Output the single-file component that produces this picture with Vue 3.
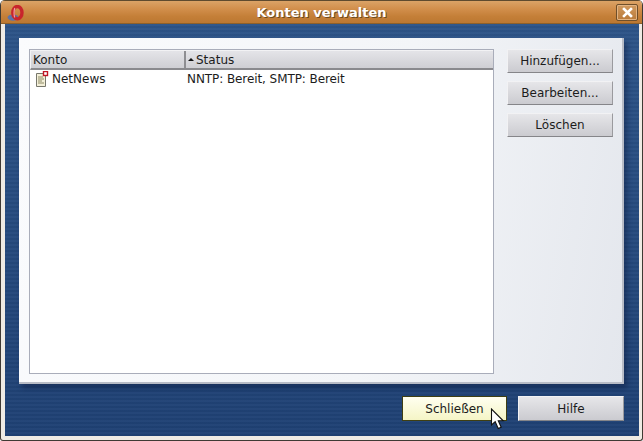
<script setup>
const sideButtons = ['Hinzufügen...', 'Bearbeiten...', 'Löschen']
</script>

<template>
  <div class="window">
    <header class="titlebar">
      <svg class="logo" width="18" height="18" viewBox="0 0 18 18">
        <ellipse cx="6" cy="12.6" rx="5.4" ry="3.2" fill="#5f73a6" />
        <ellipse cx="10.4" cy="7.7" rx="4.6" ry="6.2" fill="none" stroke="#c8242c" stroke-width="3.4" />
        <path d="M7.8 3C6.8 5.5 6.8 10.4 7.8 12.4" fill="none" stroke="#f09aa0" stroke-width="1.2" />
      </svg>
      <span class="title">Konten verwalten</span>
      <button class="close" aria-label="Schließen">
        <svg width="11" height="11" viewBox="0 0 11 11">
          <path d="M2 2L9 9M9 2L2 9" stroke="#fff" stroke-width="2.6" stroke-linecap="square" />
        </svg>
      </button>
    </header>

    <main class="desk">
      <section class="panel">
        <div class="list">
          <div class="list-head">
            <div class="col col-a">Konto</div>
            <div class="col col-b"><i class="sort"></i>Status</div>
          </div>
          <div class="row">
            <div class="cell cell-a">
              <svg width="14" height="16" viewBox="0 0 14 16">
                <path d="M1.5 2.5H10.5V15.5H1.5Z" fill="#f3efd8" stroke="#77776c" />
                <path d="M3 6H8M3 8H9M3 10H7M3 12H9" stroke="#8d8a66" />
                <rect x="8.5" y="0.5" width="4" height="4" fill="#fff" stroke="#c01525" stroke-width="1.4" />
              </svg>
              <span>NetNews</span>
            </div>
            <div class="cell cell-b">NNTP: Bereit, SMTP: Bereit</div>
          </div>
        </div>
        <div class="side">
          <button v-for="b in sideButtons" :key="b" class="btn side-btn">{{ b }}</button>
        </div>
      </section>

      <footer class="actions">
        <button class="btn big hot">Schließen</button>
        <button class="btn big">Hilfe</button>
      </footer>

      <svg class="cursor" width="16" height="22" viewBox="0 0 16 22">
        <path d="M1.5 1V17L5.2 13.6L8.2 20.5L11.2 19.2L8.3 12.8H13.2Z" fill="#fff" stroke="#111" stroke-width="1.1" />
      </svg>
    </main>
  </div>
</template>

<style>
html, body { margin: 0; padding: 0; background: #fff; }
</style>

<style scoped>
.window {
  position: relative;
  width: 643px;
  height: 441px;
  box-sizing: border-box;
  display: flex;
  flex-direction: column;
  background: #efebe4;
  border-left: 1px solid #3f3a34;
  border-right: 1px solid #3f3a34;
  border-bottom: 1px solid #3f3a34;
  border-radius: 5px 5px 3px 3px;
  font-family: "DejaVu Sans", sans-serif;
  font-size: 12px;
  color: #1c1c1c;
  overflow: hidden;
}
.titlebar {
  height: 24px;
  flex: none;
  display: flex;
  align-items: center;
  justify-content: center;
  position: relative;
  box-sizing: border-box;
  border-top: 1px solid #5f4a2e;
  border-bottom: 1px solid #8f6029;
  background: linear-gradient(#dba367 0%, #d28f4c 35%, #c47f38 70%, #bc7832 100%);
}
.logo { position: absolute; left: 6px; top: 4px; }
.title {
  color: #fff;
  font-weight: 700;
  font-size: 13px;
  text-shadow: 1px 1px 0 #6d4a20;
}
.close {
  position: absolute;
  right: 4px;
  top: 3px;
  width: 22px;
  height: 17px;
  padding: 0;
  display: flex;
  align-items: center;
  justify-content: center;
  box-sizing: border-box;
  background: linear-gradient(#d19a5f, #b97a3a);
  border: 1px solid #6f4f2a;
  border-radius: 2px;
  box-shadow: inset 0 0 0 1px #e2b382;
}
.desk {
  position: relative;
  flex: 1;
  margin: 0 3px 4px 4px;
  padding: 14px 15px 14px 14px;
  display: flex;
  flex-direction: column;
  box-sizing: border-box;
  background-color: #264a80;
  background-image:
    repeating-linear-gradient(rgba(255,255,255,.025) 0, rgba(255,255,255,.025) 2px, rgba(0,0,0,.03) 2px, rgba(0,0,0,.03) 4px),
    linear-gradient(#2d5488, #1f4174);
}
.panel {
  width: 605px;
  height: 346px;
  flex: none;
  box-sizing: border-box;
  padding: 11px 10px 8px 10px;
  display: flex;
  gap: 13px;
  background: linear-gradient(100deg, #fafbfd 0%, #f3f5f8 60%, #e4e7ed 100%);
  border-right: 2px solid #b8bcc6;
  border-bottom: 2px solid #b8bcc6;
  box-shadow: 3px 4px 5px rgba(10, 25, 60, .45);
}
.list {
  width: 465px;
  flex: none;
  box-sizing: border-box;
  background: #fff;
  border: 1px solid #a9adba;
  display: flex;
  flex-direction: column;
}
.list-head {
  height: 20px;
  display: flex;
  box-sizing: border-box;
  border-top: 1px solid #f2f2f4;
  border-left: 1px solid #f2f2f4;
  border-bottom: 2px solid #8a8a8e;
  background: linear-gradient(#e4e4e8, #cfcfd4);
}
.col { display: flex; align-items: center; line-height: 18px; }
.col-a { width: 155px; padding-left: 2px; box-sizing: border-box; border-right: 2px solid #8e8e92; }
.col-b { flex: 1; padding-left: 2px; }
.sort {
  width: 0;
  height: 0;
  margin-right: 2px;
  border-left: 3px solid transparent;
  border-right: 3px solid transparent;
  border-bottom: 3px solid #111;
}
.row { display: flex; height: 18px; align-items: center; }
.cell-a { width: 157px; display: flex; align-items: center; gap: 3px; padding-left: 5px; box-sizing: border-box; }
.cell-b { flex: 1; letter-spacing: -0.08px; }
.side {
  flex: 1;
  display: flex;
  flex-direction: column;
  gap: 8px;
}
.btn {
  font: inherit;
  color: #1c1c1c;
  padding: 0;
  box-sizing: border-box;
  background: linear-gradient(#e6e6e9, #cbcbd0);
  border: none;
  border-top: 1px solid #f2f2f4;
  border-left: 1px solid #f2f2f4;
  border-right: 1px solid #9a9a9e;
  border-bottom: 1px solid #858589;
}
.side-btn { height: 24px; width: 106px; }
.actions {
  flex: 1;
  display: flex;
  justify-content: flex-end;
  align-items: flex-start;
  gap: 11px;
  padding-top: 12px;
}
.big { width: 106px; height: 25px; }
.hot {
  width: 105px;
  background: linear-gradient(#fffff0, #f5f5c6);
  border: 1px solid #3f3f12;
}
.cursor { position: absolute; left: 485px; top: 384px; }
</style>
